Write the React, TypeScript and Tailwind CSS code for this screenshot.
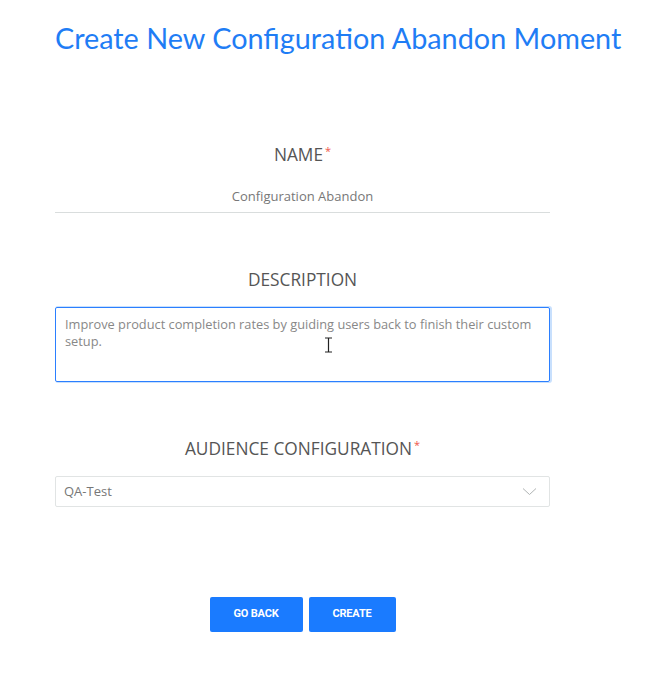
import React from "react";

function Label({ text, required }: { text: string; required?: boolean }) {
  return (
    <div className="flex justify-center text-[17.3px] leading-[22px] text-[#555555] [font-family:'Open_Sans',sans-serif]">
      <span>{text}</span>
      {required && (
        <span className="ml-[2px] -mt-[4px] text-[11px] leading-[22px] text-[#f0564a]">*</span>
      )}
    </div>
  );
}

export default function App() {
  return (
    <div className="min-h-[675px] w-[647px] bg-white">
      <h1 className="pl-[55px] pt-[21px] text-[28.8px] leading-[34px] text-[#1f7df5] [font-family:Lato,sans-serif]">
        Create New Configuration Abandon Moment
      </h1>

      <div className="ml-[55px] mt-[89px] w-[495px] [font-family:'Open_Sans',sans-serif]">
        <Label text="NAME" required />
        <div className="mt-[16px] flex h-[31px] items-center justify-center border-b border-[#d9dddd] text-[13px] text-[#777777]">
          Configuration Abandon
        </div>

        <div className="mt-[56px]">
          <Label text="DESCRIPTION" />
        </div>
        <div className="relative mt-[16px] h-[75px] w-full rounded-[2px] border border-solid border-blue-500 px-[9px] py-[8px] text-[12.8px] leading-[17px] text-[#888888] shadow-[1px_0_0_1px_rgba(96,165,250,0.35)]">
          Improve product completion rates by guiding users back to finish their custom setup.
          <svg className="pointer-events-none absolute left-[268px] top-[29px]" width="9" height="16" viewBox="0 0 9 16">
            <path d="M1 1h7M4.5 1v14M1 15h7" stroke="#222" strokeWidth="1.2" fill="none" />
          </svg>
        </div>

        <div className="mt-[56px]">
          <Label text="AUDIENCE CONFIGURATION" required />
        </div>
        <div className="mt-[16px] flex h-[31px] items-center justify-between rounded-[2px] border border-[#e1e4e4] pl-[8px] pr-[12px] text-[13px] text-[#777777]">
          <span>QA-Test</span>
          <svg width="15" height="9" viewBox="0 0 15 9">
            <path d="M1 1.5l6.5 6 6.5-6" stroke="#b0b4b4" strokeWidth="1" fill="none" />
          </svg>
        </div>

        <div className="mt-[90px] flex justify-center gap-[6px] [font-family:Roboto,sans-serif]">
          <button className="h-[35px] w-[93px] rounded-[2px] bg-[#1a7bff] text-[11px] font-bold tracking-[-0.2px] text-white">
            GO BACK
          </button>
          <button className="h-[35px] w-[87px] rounded-[2px] bg-[#1a7bff] text-[11px] font-bold tracking-[-0.2px] text-white">
            CREATE
          </button>
        </div>
      </div>
    </div>
  );
}
